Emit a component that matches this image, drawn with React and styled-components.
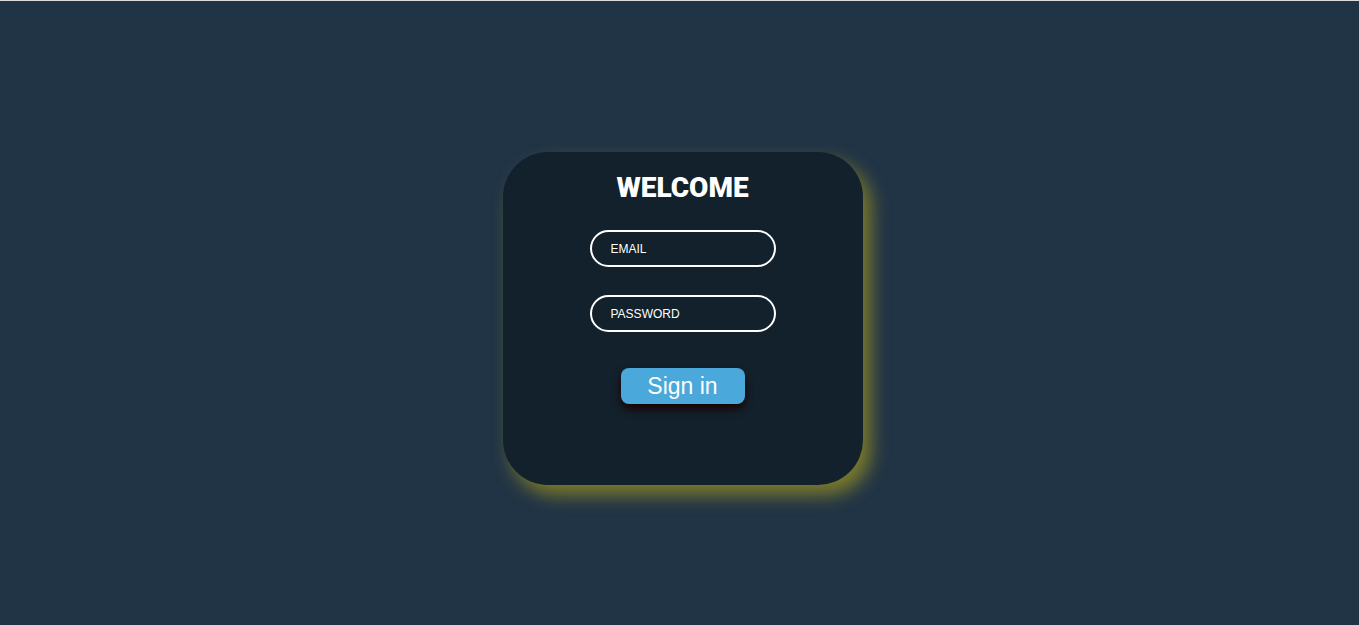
import React from 'react';
import styled, { createGlobalStyle } from 'styled-components';

const GlobalStyle = createGlobalStyle`
  html, body {
    margin: 0;
    padding: 0;
  }
  body {
    background: #213446;
    font-family: "Liberation Sans", Arial, sans-serif;
    overflow: hidden;
  }
`;

const Page = styled.div`
  height: 625px;
  box-sizing: border-box;
  border-top: 1px solid #dcdcdc;
  display: flex;
  justify-content: center;
  align-items: flex-start;
  padding: 151px 0 0 6px;
`;

const Card = styled.form`
  width: 360px;
  height: 333px;
  box-sizing: border-box;
  background: #13212c;
  border-radius: 45px;
  box-shadow: 8px 10px 18px rgba(160, 150, 30, 0.72);
  display: flex;
  flex-direction: column;
  align-items: center;
  padding-top: 20px;
`;

const Title = styled.h1`
  margin: 0;
  font-family: Roboto, "Liberation Sans", sans-serif;
  font-weight: 900;
  font-size: 28px;
  line-height: 32px;
  color: #fff;
  margin-bottom: 26px;
`;

const Field = styled.input`
  width: 186px;
  height: 37px;
  box-sizing: border-box;
  border: 2px solid #fff;
  border-radius: 19px;
  background: transparent;
  color: #fff;
  font-family: "Liberation Sans", Arial, sans-serif;
  font-size: 12px;
  padding: 1px 0 0 19px;
  margin-bottom: ${props => (props.$last ? '26px' : '28px')};
  outline: none;
  &::placeholder {
    color: #fff;
    opacity: 1;
  }
`;

const Button = styled.button`
  margin-top: 10px;
  width: 124px;
  height: 36px;
  border: none;
  border-radius: 8px;
  background: #4aa8db;
  color: #fff;
  font-family: "Liberation Sans", Arial, sans-serif;
  font-size: 23px;
  line-height: 36px;
  padding: 0;
  box-shadow: 0 5px 8px rgba(25, 0, 0, 0.95);
  cursor: pointer;
`;

const App = () => (
  <>
    <GlobalStyle />
    <Page>
      <Card onSubmit={e => e.preventDefault()}>
        <Title>WELCOME</Title>
        <Field type="email" placeholder="EMAIL" />
        <Field type="password" placeholder="PASSWORD" $last />
        <Button type="submit">Sign in</Button>
      </Card>
    </Page>
  </>
);

export default App;
